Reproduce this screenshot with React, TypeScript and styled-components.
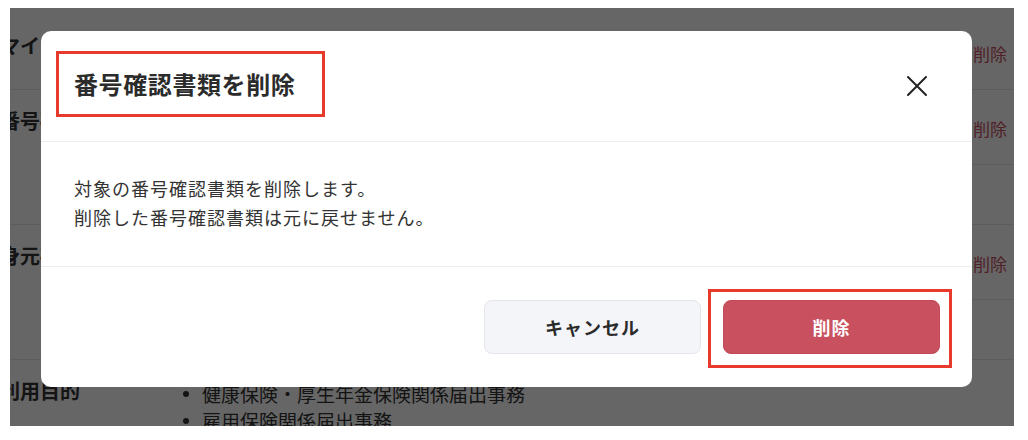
import React from "react";
import styled, { createGlobalStyle } from "styled-components";

const GlobalStyle = createGlobalStyle`
  html, body {
    margin: 0;
    padding: 0;
    background: #ffffff;
    overflow: hidden;
  }
  body {
    font-family: "Noto Sans CJK JP", "Noto Sans", sans-serif;
    color: #333333;
  }
  * { box-sizing: border-box; }
`;

const Stage = styled.div`
  position: relative;
  margin: 8px 14px 14px 10px;
  height: 418px;
  overflow: hidden;
  background: #ffffff;
`;

/* ---------- background page (under the overlay) ---------- */

const Table = styled.div`
  margin: 7px 0 0 -10px;
  width: calc(100% + 10px);
`;

const Row = styled.div`
  display: grid;
  grid-template-columns: 170px 1fr;
  border-bottom: 1px solid #e6e6e6;
`;

const Label = styled.div`
  padding-top: 16px;
  font-size: 20px;
  line-height: 30px;
  font-weight: 700;
  color: #333333;
  white-space: nowrap;
`;

const Values = styled.div`
  display: flex;
  flex-direction: column;
`;

const SubRow = styled.div<{ $h: number; $last?: boolean }>`
  height: ${(p) => p.$h}px;
  display: flex;
  align-items: center;
  justify-content: flex-end;
  padding: 4px 7px 0 0;
  border-bottom: ${(p) => (p.$last ? "none" : "1px solid #e6e6e6")};
`;

const LinkButton = styled.span`
  font-size: 17px;
  line-height: 24px;
  color: #c9515f;
`;

const List = styled.ul`
  list-style: none;
  margin: 0;
  padding: 20px 0 0 0;
`;

const ListItem = styled.li`
  display: flex;
  align-items: center;
  font-size: 19px;
  line-height: 27px;
  color: #333333;
  white-space: nowrap;
`;

const Dot = styled.span`
  width: 32px;
  display: flex;
  justify-content: center;
  &::before {
    content: "";
    width: 6px;
    height: 6px;
    border-radius: 50%;
    background: #333333;
  }
`;

/* ---------- overlay + dialog ---------- */

const Overlay = styled.div`
  position: absolute;
  inset: 0;
  background: rgba(0, 0, 0, 0.6);
  display: flex;
  align-items: flex-start;
  padding: 23px 42px 0 31px;
`;

const Dialog = styled.div`
  width: 100%;
  background: #ffffff;
  border-radius: 10px;
  display: flex;
  flex-direction: column;
  overflow: hidden;
`;

const Header = styled.div`
  height: 111px;
  border-bottom: 1px solid #eeeeee;
  display: flex;
  align-items: center;
  justify-content: space-between;
  padding: 0 43px 0 15px;
`;

const Annotation = styled.div`
  border: 3px solid #e8392d;
`;

const TitleBox = styled(Annotation)`
  width: 269px;
  height: 66px;
  display: flex;
  align-items: center;
  padding-left: 15px;
  margin-bottom: 4px;
`;

const Title = styled.h2`
  margin: 0;
  font-size: 24px;
  line-height: 32px;
  font-weight: 700;
  letter-spacing: 0.6px;
  color: #2b2b2b;
  white-space: nowrap;
`;

const CloseButton = styled.button`
  width: 24px;
  height: 24px;
  padding: 0;
  border: none;
  background: transparent;
  display: flex;
  align-items: center;
  justify-content: center;
  color: #222222;
  cursor: pointer;
`;

const Body = styled.div`
  padding: 32px 33px 34px;
  border-bottom: 1px solid #eeeeee;
`;

const Message = styled.p`
  margin: 0;
  font-size: 18px;
  line-height: 29px;
  letter-spacing: 1px;
  color: #333333;
`;

const Footer = styled.div`
  height: 120px;
  display: flex;
  align-items: center;
  justify-content: flex-end;
  padding-right: 20px;
`;

const Button = styled.button<{ $variant: "secondary" | "danger" }>`
  width: 217px;
  height: 54px;
  border-radius: 8px;
  font-family: inherit;
  font-size: 18px;
  font-weight: 700;
  letter-spacing: 1px;
  cursor: pointer;
  background: ${(p) => (p.$variant === "danger" ? "#c9515f" : "#f4f5f9")};
  color: ${(p) => (p.$variant === "danger" ? "#ffffff" : "#2b2b2b")};
  border: 1px solid ${(p) => (p.$variant === "danger" ? "#c24a58" : "#e3e5ea")};
`;

const ButtonHighlight = styled(Annotation)`
  margin: 3px 0 0 7px;
  padding: 8px 9px 11px 12px;
  display: flex;
`;

const CloseIcon = () => (
  <svg width="22" height="22" viewBox="0 0 22 22" fill="none">
    <path
      d="M2 2 L20 20 M20 2 L2 20"
      stroke="currentColor"
      strokeWidth="2"
      strokeLinecap="round"
    />
  </svg>
);

export default function App() {
  return (
    <>
      <GlobalStyle />
      <Stage>
        <Table>
          <Row>
            <Label>マイナンバー</Label>
            <Values>
              <SubRow $h={74} $last>
                <LinkButton>削除</LinkButton>
              </SubRow>
            </Values>
          </Row>
          <Row>
            <Label>番号確認書類</Label>
            <Values>
              <SubRow $h={75}>
                <LinkButton>削除</LinkButton>
              </SubRow>
              <SubRow $h={59} $last />
            </Values>
          </Row>
          <Row>
            <Label>身元確認書類</Label>
            <Values>
              <SubRow $h={75}>
                <LinkButton>削除</LinkButton>
              </SubRow>
              <SubRow $h={59} $last />
            </Values>
          </Row>
          <Row>
            <Label>利用目的</Label>
            <List>
              <ListItem>
                <Dot />
                健康保険・厚生年金保険関係届出事務
              </ListItem>
              <ListItem>
                <Dot />
                雇用保険関係届出事務
              </ListItem>
            </List>
          </Row>
        </Table>

        <Overlay>
          <Dialog role="dialog" aria-modal="true">
            <Header>
              <TitleBox>
                <Title>番号確認書類を削除</Title>
              </TitleBox>
              <CloseButton aria-label="閉じる">
                <CloseIcon />
              </CloseButton>
            </Header>
            <Body>
              <Message>対象の番号確認書類を削除します。</Message>
              <Message>削除した番号確認書類は元に戻せません。</Message>
            </Body>
            <Footer>
              <Button $variant="secondary">キャンセル</Button>
              <ButtonHighlight>
                <Button $variant="danger">削除</Button>
              </ButtonHighlight>
            </Footer>
          </Dialog>
        </Overlay>
      </Stage>
    </>
  );
}
